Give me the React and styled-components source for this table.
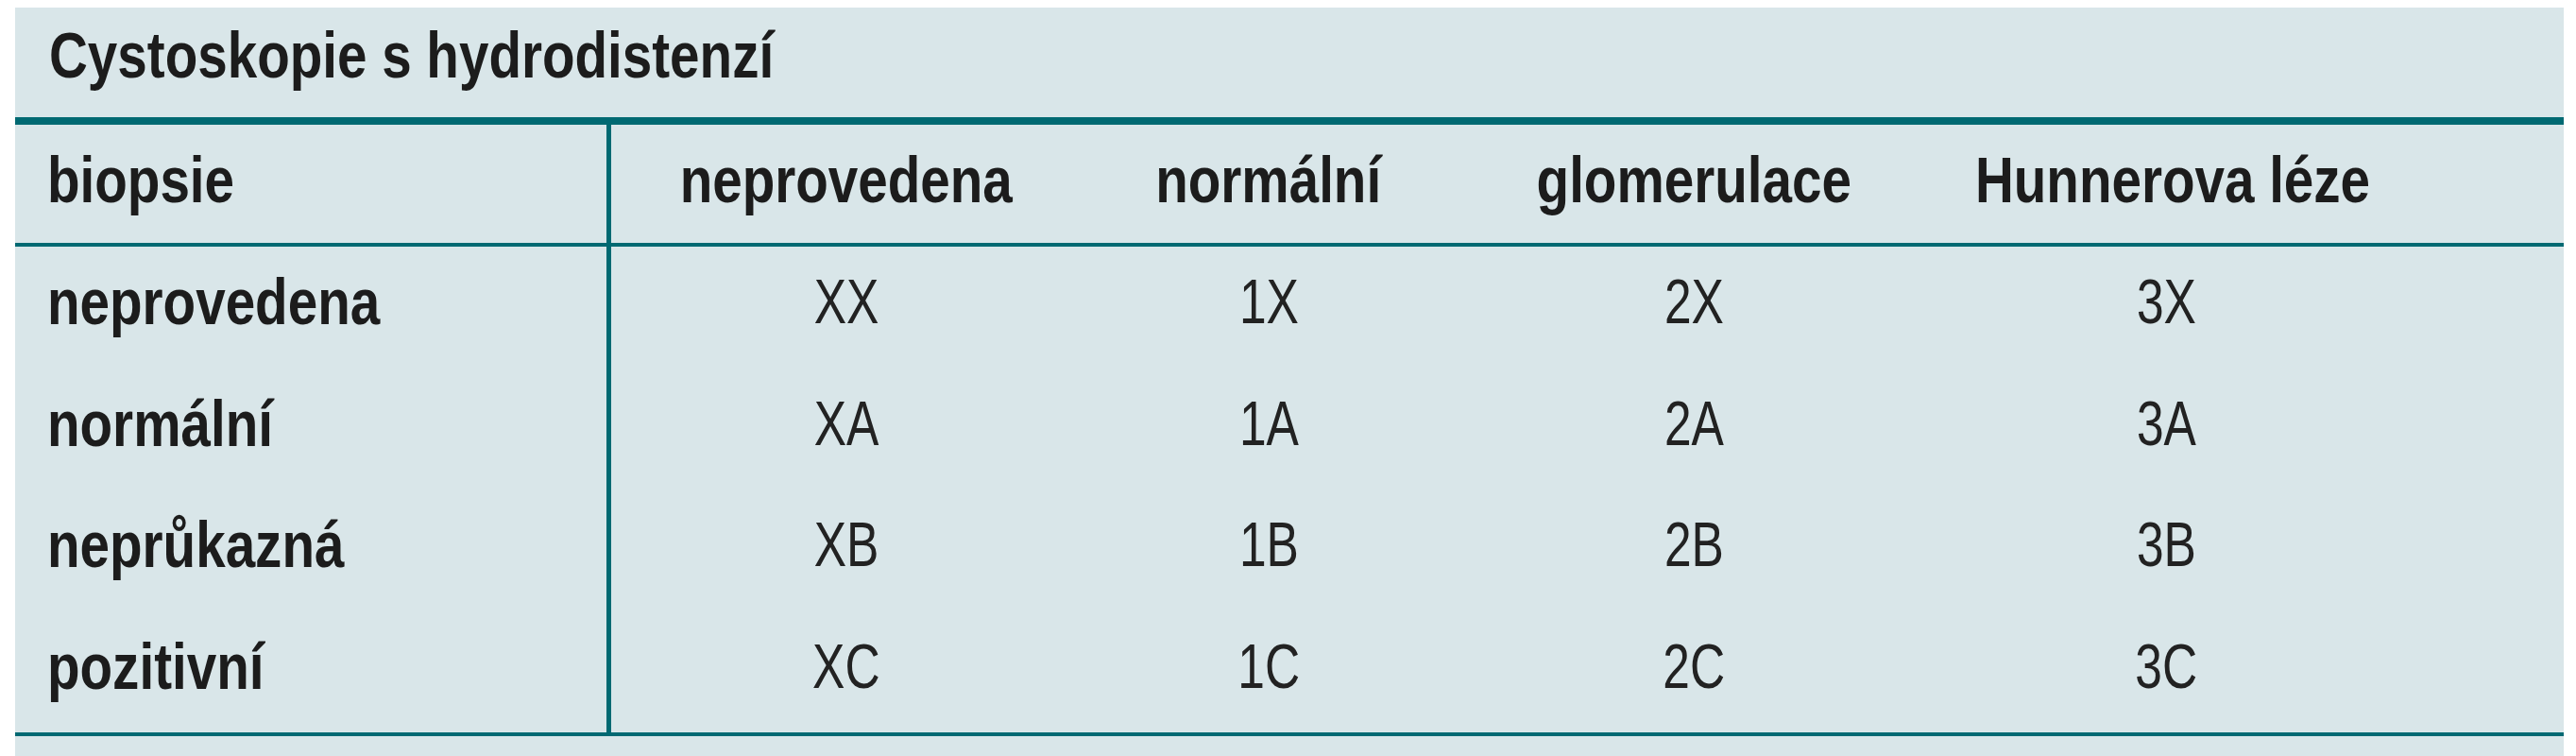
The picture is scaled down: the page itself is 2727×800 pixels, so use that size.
import React from 'react';
import styled, { createGlobalStyle } from 'styled-components';

const Global = createGlobalStyle`
  html, body { margin: 0; padding: 0; background: #ffffff; }
  body {
    font-family: "Liberation Sans", Arial, Helvetica, sans-serif;
  }
`;

const TEAL = '#006972';
const COLS = '631px 498px 396px 504px 496px 1fr';

const Page = styled.div`
  padding: 8px 13px 0 16px;
`;

const Panel = styled.section`
  background: #d9e6e9;
  color: #1c1c1c;
  padding-bottom: 21px;
`;

/* condensed face: the regular sans narrowed horizontally */
const Narrow = styled.span`
  display: inline-block;
  transform: scaleX(${(p) => p.$sx || 0.82});
  transform-origin: ${(p) => (p.$center ? 'center' : 'left')} center;
  white-space: nowrap;
`;

const TitleBar = styled.h2`
  margin: 0;
  height: 100px;
  padding: 16px 0 0 36px;
  border-bottom: 8px solid ${TEAL};
  font-size: 69px;
  line-height: 69px;
  font-weight: 700;
  white-space: nowrap;
`;

const Row = styled.div`
  display: grid;
  grid-template-columns: ${COLS};
  height: ${(p) => p.$h}px;
`;

const HeadRow = styled(Row)`
  border-bottom: 4px solid ${TEAL};
`;

const Body = styled.div`
  border-bottom: 4px solid ${TEAL};
`;

const LabelCell = styled.div`
  box-sizing: border-box;
  border-right: 5px solid ${TEAL};
  padding: 24px 0 0 34px;
  font-size: 69px;
  line-height: 69px;
  font-weight: 700;
  white-space: nowrap;
`;

const HeadCell = styled.div`
  padding-top: 24px;
  text-align: center;
  font-size: 69px;
  line-height: 69px;
  font-weight: 700;
  white-space: nowrap;
`;

const DataCell = styled.div`
  padding-top: 24px;
  text-align: center;
  font-size: 66px;
  line-height: 69px;
  font-weight: 400;
  color: #222;
  white-space: nowrap;
`;

const heads = ['neprovedena', 'normální', 'glomerulace', 'Hunnerova léze'];
const rows = [
  { label: 'neprovedena', cells: ['XX', '1X', '2X', '3X'] },
  { label: 'normální', cells: ['XA', '1A', '2A', '3A'] },
  { label: 'neprůkazná', cells: ['XB', '1B', '2B', '3B'] },
  { label: 'pozitivní', cells: ['XC', '1C', '2C', '3C'] },
];

export default function App() {
  return (
    <>
      <Global />
      <Page>
        <Panel>
          <TitleBar>
            <Narrow>Cystoskopie s hydrodistenzí</Narrow>
          </TitleBar>
          <HeadRow $h={125}>
            <LabelCell>
              <Narrow>biopsie</Narrow>
            </LabelCell>
            {heads.map((h) => (
              <HeadCell key={h}>
                <Narrow $center>{h}</Narrow>
              </HeadCell>
            ))}
            <div />
          </HeadRow>
          <Body>
            {rows.map((r) => (
              <Row key={r.label} $h={128.5}>
                <LabelCell>
                  <Narrow>{r.label}</Narrow>
                </LabelCell>
                {r.cells.map((c) => (
                  <DataCell key={c}>
                    <Narrow $center $sx={0.78}>{c}</Narrow>
                  </DataCell>
                ))}
                <div />
              </Row>
            ))}
          </Body>
        </Panel>
      </Page>
    </>
  );
}
